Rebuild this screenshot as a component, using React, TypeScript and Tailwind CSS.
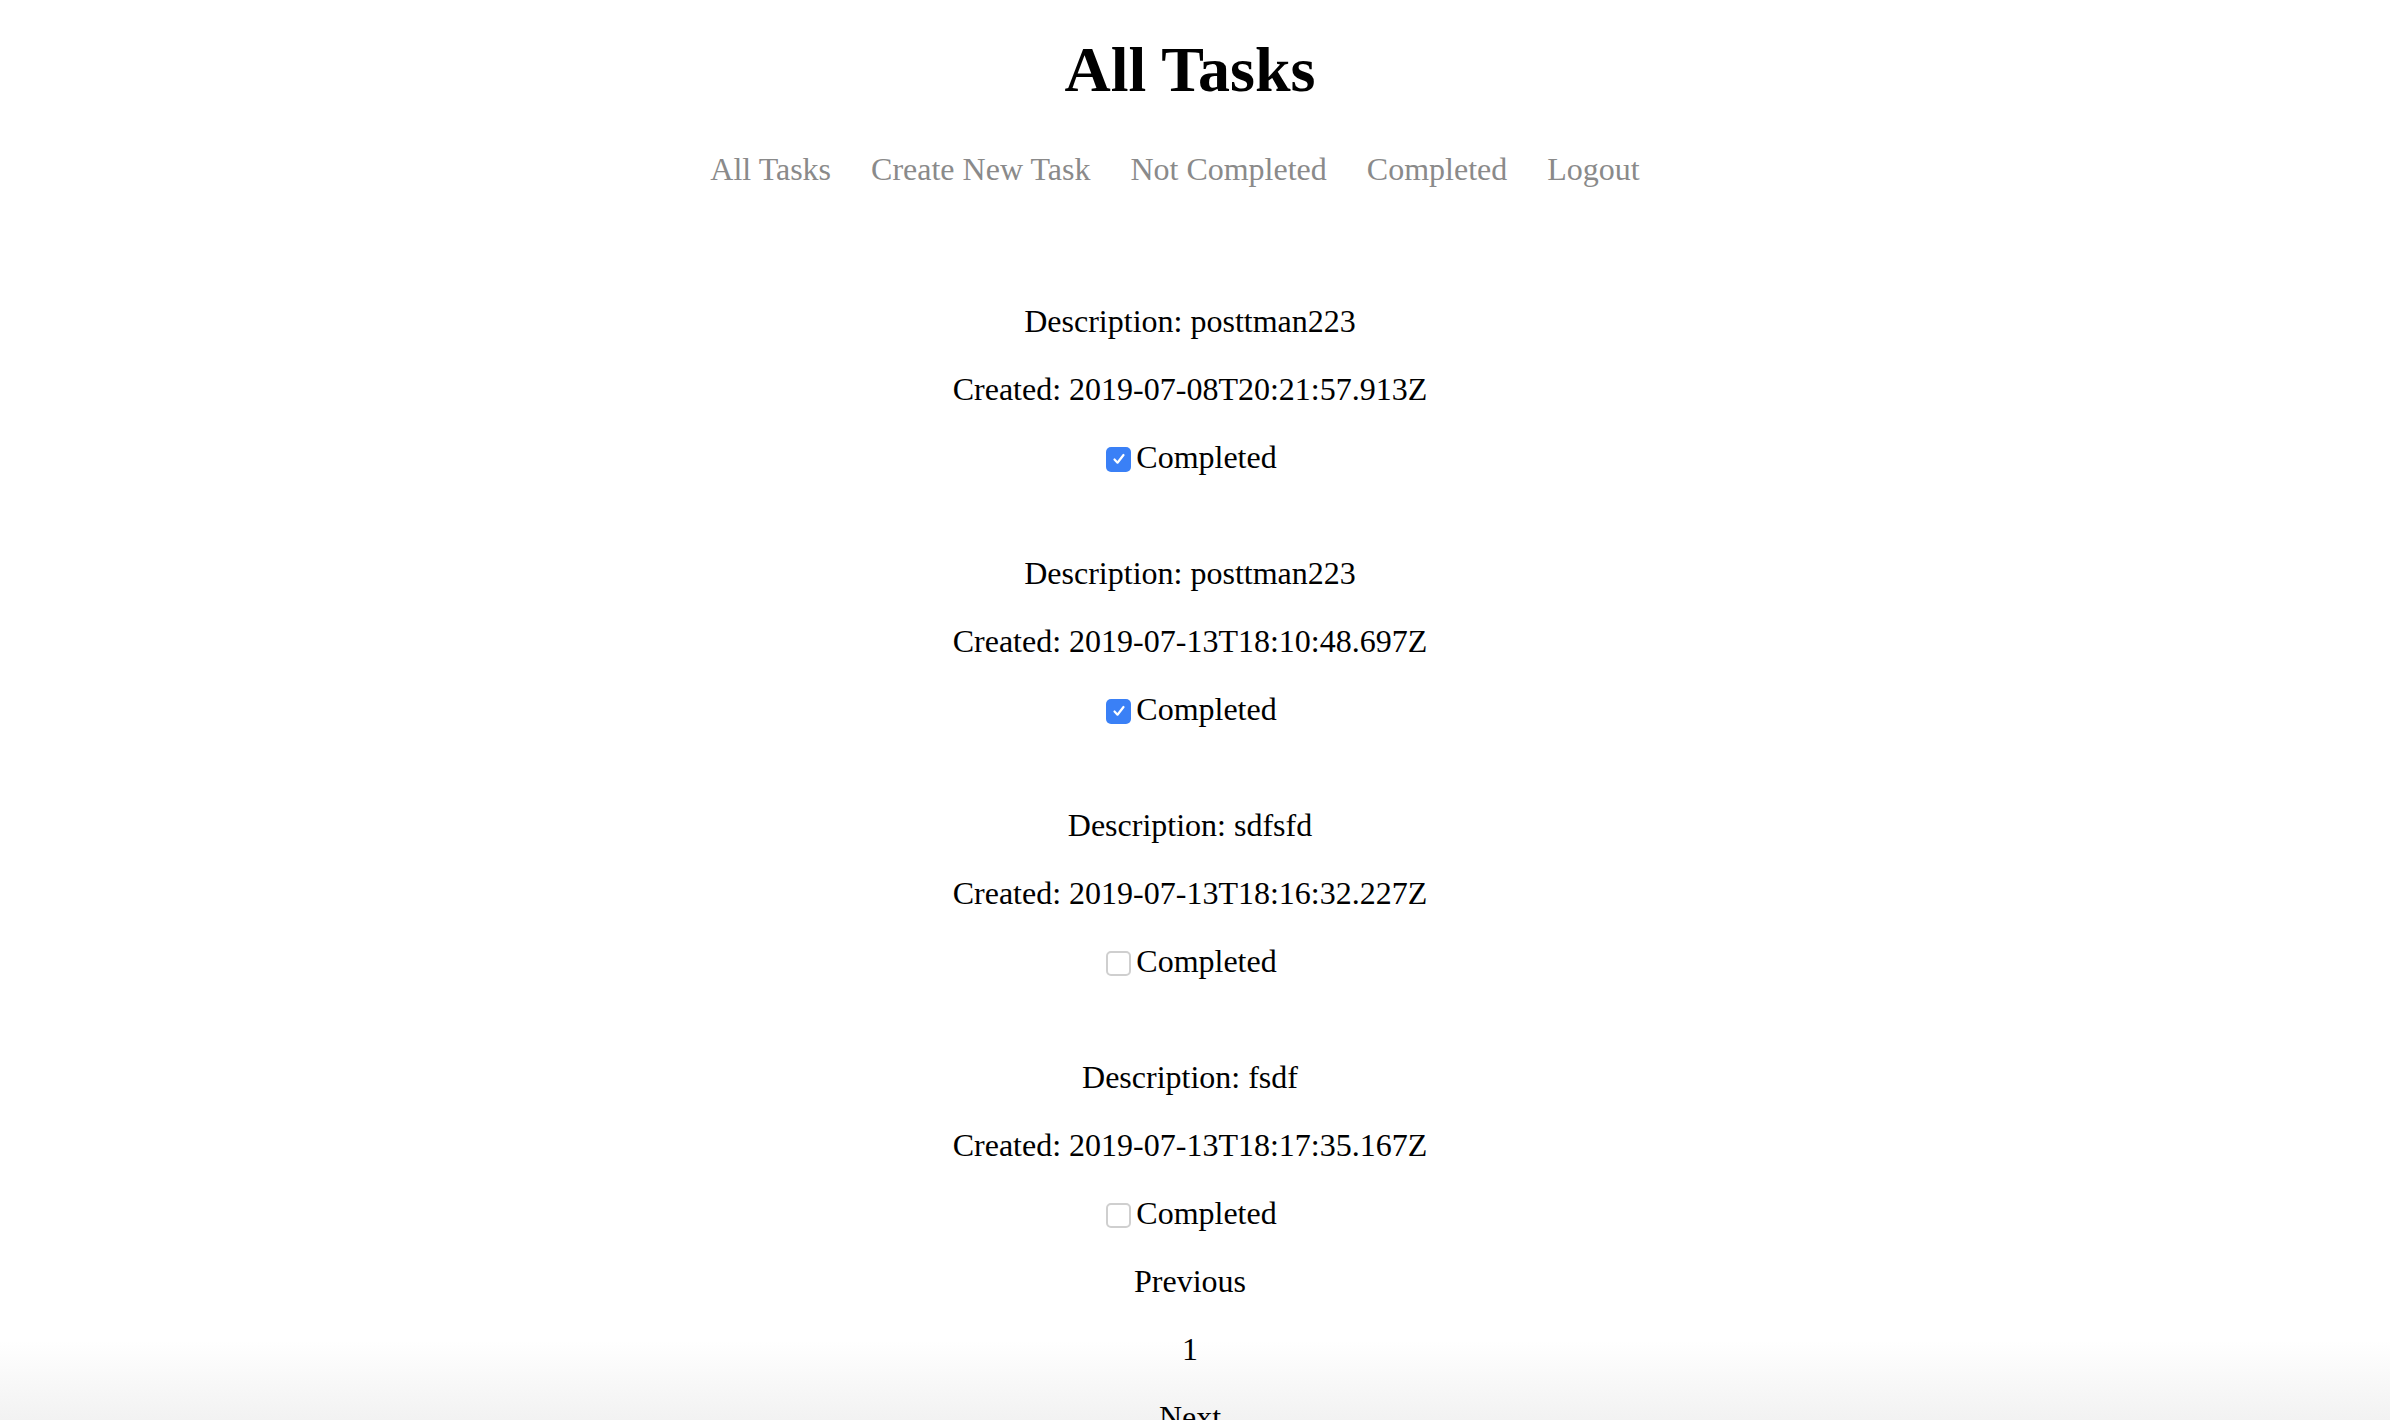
import React from 'react';

const tasks = [
    { description: 'posttman223', createdAt: '2019-07-08T20:21:57.913Z', completed: true },
    { description: 'posttman223', createdAt: '2019-07-13T18:10:48.697Z', completed: true },
    { description: 'sdfsfd', createdAt: '2019-07-13T18:16:32.227Z', completed: false },
    { description: 'fsdf', createdAt: '2019-07-13T18:17:35.167Z', completed: false },
]

const links = ['All Tasks', 'Create New Task', 'Not Completed', 'Completed', 'Logout']

function Box({ checked }: { checked: boolean }) {
    if (checked) {
        return (
            <span className="w-[25px] h-[25px] rounded-[5px] bg-[#3a80f6] flex items-center justify-center translate-y-[2px]">
                <svg width="16" height="16" viewBox="0 0 16 16" fill="none">
                    <path d="M3.5 8.5l3 3.2L12.5 4" stroke="white" strokeWidth="2.2" strokeLinecap="round" strokeLinejoin="round" />
                </svg>
            </span>
        )
    }
    return <span className="w-[25px] h-[25px] rounded-[5px] bg-white border-[2px] border-[#cfcfcf] translate-y-[2px]" />
}

export default function App() {
    return (
        <div className="h-[1420px] overflow-hidden text-black font-['Liberation_Serif',serif] bg-[linear-gradient(to_bottom,#ffffff_calc(100%-80px),#f2f2f2)]">
            <div className="flex flex-col items-center pr-[10px]">
                <h1 className="mt-[33px] text-[64px] leading-[74px] font-bold">All Tasks</h1>
                <nav className="mt-[44px] pr-[30px] flex gap-[40px] text-[32px] leading-[36px] text-[#8a8a8a]">
                    {links.map((l) => (
                        <a key={l} href="#">{l}</a>
                    ))}
                </nav>
                <div className="mt-[116px] flex flex-col gap-[80px] text-[32px] leading-[36px]">
                    {tasks.map((t, key) => (
                        <div key={key} className="flex flex-col items-center gap-[32px]">
                            <p>Description: {t.description}</p>
                            <p>Created: {t.createdAt}</p>
                            <label className="flex items-center pl-[3px]">
                                <Box checked={t.completed} />
                                <span className="ml-[5px]">Completed</span>
                            </label>
                        </div>
                    ))}
                </div>
                <div className="mt-[32px] flex flex-col items-center gap-[32px] text-[32px] leading-[36px]">
                    <div>Previous</div>
                    <div>1</div>
                    <div>Next</div>
                </div>
            </div>
        </div>
    )
}
